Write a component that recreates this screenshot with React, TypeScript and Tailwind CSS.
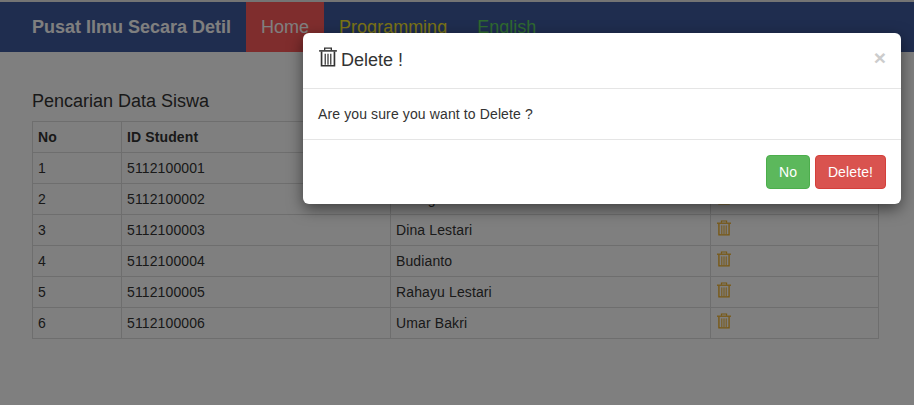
const students = [
  { no: 1, id: "5112100001", name: "" },
  { no: 2, id: "5112100002", name: "Lia Agus" },
  { no: 3, id: "5112100003", name: "Dina Lestari" },
  { no: 4, id: "5112100004", name: "Budianto" },
  { no: 5, id: "5112100005", name: "Rahayu Lestari" },
  { no: 6, id: "5112100006", name: "Umar Bakri" },
]

const TrashIcon = ({ className }: { className: string }) => (
  <svg viewBox="0 0 16 18" fill="none" stroke="currentColor" className={className}>
    <path d="M5 3V1H11V3" strokeWidth="1.2" />
    <path d="M0 3.5H16" strokeWidth="1.4" />
    <path d="M2.2 4V16.9H13.8V4" strokeWidth="1.5" />
    <path d="M5.5 6V16M8 6V16M10.5 6V16" strokeWidth="1.1" />
  </svg>
)

const App = () => {
  return (
    <div className="relative h-[405px] w-[914px] overflow-hidden bg-white font-['Liberation_Sans',Arial,sans-serif] text-sm tracking-[0.12px] text-[#333]">
      {/* page behind the modal */}
      <div className="h-[2px] bg-[#e8e8e8]" />
      <nav className="flex h-[50px] items-stretch bg-[#3e5a9e] pl-8 tracking-normal">
        <a className="mr-[15px] flex items-center text-lg font-bold text-white">Pusat Ilmu Secara Detil</a>
        <a className="flex items-center bg-[#fe5a5a] px-[15px] text-lg text-white">Home</a>
        <a className="flex items-center px-[15px] text-lg text-[#f5e52a]">Programming</a>
        <a className="flex items-center px-[15px] text-lg text-[#5fd35f]">English</a>
      </nav>
      <main className="px-8">
        <h3 className="mt-[39px] mb-[10px] text-lg leading-5 tracking-normal">Pencarian Data Siswa</h3>
        <table className="w-[847px] table-fixed border-collapse">
          <thead>
            <tr className="h-[31px]">
              <th className="w-[89px] border border-[#ddd] px-[5px] text-left font-bold">No</th>
              <th className="w-[269px] border border-[#ddd] px-[5px] text-left font-bold">ID Student</th>
              <th className="w-[320px] border border-[#ddd] px-[5px] text-left font-bold">Name</th>
              <th className="border border-[#ddd] px-[5px] text-left font-bold">Action</th>
            </tr>
          </thead>
          <tbody>
            {students.map((s) => (
              <tr key={s.no} className="h-[31px]">
                <td className="border border-[#ddd] px-[5px]">{s.no}</td>
                <td className="border border-[#ddd] px-[5px]">{s.id}</td>
                <td className="border border-[#ddd] px-[5px]">{s.name}</td>
                <td className="border border-[#ddd] px-[5px]">
                  <TrashIcon className="mb-[5px] ml-[1px] h-[16px] w-[14px] text-[#f0ad1e]" />
                </td>
              </tr>
            ))}
          </tbody>
        </table>
      </main>

      {/* backdrop */}
      <div className="absolute inset-0 bg-black/50" />

      {/* modal */}
      <div className="absolute top-[33px] left-[303px] w-[598px] rounded-md bg-white shadow-[0_5px_15px_rgba(0,0,0,0.5)]">
        <div className="flex h-[56px] items-center justify-between border-b border-[#e5e5e5] pr-[15px] pl-4">
          <div className="flex items-center gap-[4px] pb-[2px] text-lg tracking-normal">
            <TrashIcon className="mb-[5px] h-[20px] w-[18px] text-[#333]" />
            <span>Delete !</span>
          </div>
          <span className="mb-[6px] text-[21px] leading-none font-bold tracking-normal text-[#ccc]">×</span>
        </div>
        <div className="flex h-[51px] items-center border-b border-[#e5e5e5] px-[15px]">Are you sure you want to Delete ?</div>
        <div className="flex h-[64px] items-start justify-end gap-[5px] pt-[15px] pr-[15px]">
          <button className="h-[34px] w-[44px] rounded border border-[#4cae4c] bg-[#5cb85c] text-white">No</button>
          <button className="h-[34px] w-[71px] rounded border border-[#d43f3a] bg-[#d9534f] text-white">Delete!</button>
        </div>
      </div>
    </div>
  )
}

export default App
